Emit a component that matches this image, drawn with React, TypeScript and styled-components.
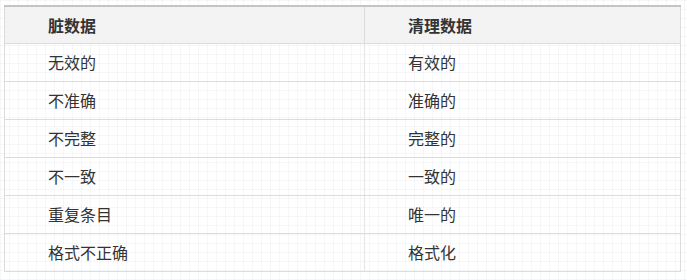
import React from 'react'
import styled, { createGlobalStyle } from 'styled-components'

const rows: [string, string][] = [
  ['无效的', '有效的'],
  ['不准确', '准确的'],
  ['不完整', '完整的'],
  ['不一致', '一致的'],
  ['重复条目', '唯一的'],
  ['格式不正确', '格式化'],
]

const GlobalStyle = createGlobalStyle`
  html, body {
    margin: 0;
    padding: 0;
    background-color: #fff;
    background-image:
      linear-gradient(to right, rgba(220, 226, 234, 0.28) 1px, transparent 1px),
      linear-gradient(to bottom, rgba(220, 226, 234, 0.28) 1px, transparent 1px);
    background-size: 9px 9px;
    font-family: 'Noto Sans CJK SC', 'Noto Sans', sans-serif;
  }
  *, *::before, *::after {
    box-sizing: border-box;
  }
`

const App = () => {
  return (
    <>
      <GlobalStyle />
      <StyledWrap>
        <StyledTable>
          <thead>
            <tr>
              <StyledHeadCell $first>脏数据</StyledHeadCell>
              <StyledHeadCell>清理数据</StyledHeadCell>
            </tr>
          </thead>
          <tbody>
            {rows.map(([dirty, clean]) => (
              <tr key={dirty}>
                <StyledCell $first>{dirty}</StyledCell>
                <StyledCell>{clean}</StyledCell>
              </tr>
            ))}
          </tbody>
        </StyledTable>
      </StyledWrap>
    </>
  )
}
export default App

const StyledWrap = styled.div`
  padding: 5px 6px 0 4px;
`
const StyledTable = styled.table`
  width: 677px;
  border-collapse: collapse;
  table-layout: fixed;
  border-top: 2px solid #c4c4c4;
  border-left: 1px solid #dcdcdc;
  border-right: 1px solid #dcdcdc;
  border-bottom: 1px solid #dcdcdc;
`
const StyledHeadCell = styled.th<{ $first?: boolean }>`
  width: ${(p) => (p.$first ? '360px' : 'auto')};
  height: 37px;
  padding: 0 0 0 43px;
  text-align: left;
  font-size: 16px;
  font-weight: 700;
  color: #333;
  background: #f3f3f3;
  border-right: ${(p) => (p.$first ? '1px solid #dcdcdc' : 'none')};
  border-bottom: 1px solid #dcdcdc;
`
const StyledCell = styled.td<{ $first?: boolean }>`
  height: 38px;
  padding: 0 0 0 43px;
  font-size: 16px;
  color: #333;
  border-right: ${(p) => (p.$first ? '1px solid #e4e4e4' : 'none')};
  border-bottom: 1px solid #dcdcdc;
`
